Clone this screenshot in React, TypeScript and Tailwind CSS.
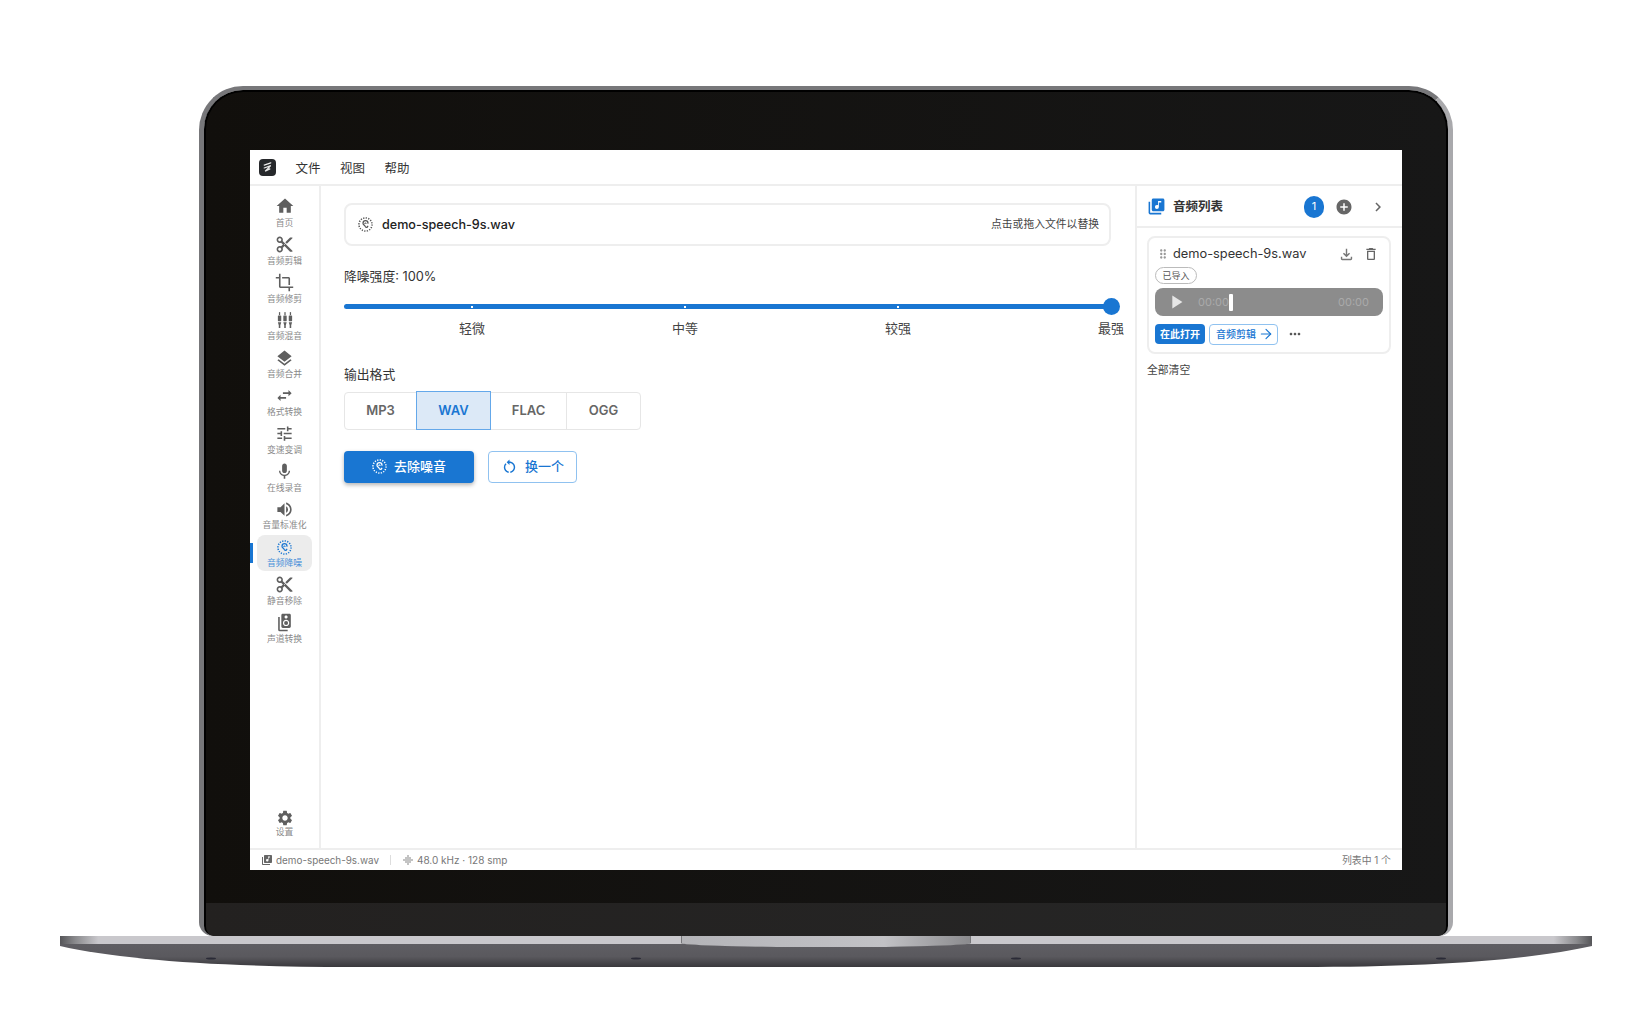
import { ArrowRight } from "lucide-react";
import type { ReactNode } from "react";
import {
  MdAddCircle,
  MdChevronRight,
  MdContentCut,
  MdCrop,
  MdDragIndicator,
  MdGraphicEq,
  MdHome,
  MdLayers,
  MdLibraryMusic,
  MdMic,
  MdMoreHoriz,
  MdOutlineDelete,
  MdOutlineFileDownload,
  MdPlayArrow,
  MdRestartAlt,
  MdSettings,
  MdSpeakerGroup,
  MdSwapHoriz,
  MdTune,
  MdVolumeUp,
} from "react-icons/md";

const FONT = "font-['Inter','Noto_Sans_CJK_SC',sans-serif]";

function NoiseIcon({ className }: { className?: string }) {
  return (
    <svg viewBox="0 0 24 24" fill="none" stroke="currentColor" className={className}>
      <circle cx="12" cy="12" r="10.500" strokeWidth="2.400" strokeDasharray="2 2.120" />
      <path
        d="M16 9.800a4 4 0 0 0-8 0c0 2.600 2.300 2.700 3 4.400.5 1.400 1.300 2.300 2.500 2.300 1.100 0 1.900-.7 2.200-1.700"
        strokeWidth="2"
        strokeLinecap="round"
      />
      <path d="M13 10a1.200 1.200 0 0 0-2 .3" strokeWidth="1.700" strokeLinecap="round" />
    </svg>
  );
}

function MixerIcon({ className }: { className?: string }) {
  return (
    <svg viewBox="0 0 24 24" fill="currentColor" className={className}>
      {[2.500, 9.750, 17].map((x) => (
        <g key={x}>
          <rect x={x + 1.400} y="1.500" width="1.700" height="4" />
          <rect x={x} y="6" width="4.500" height="7.500" rx="0.800" />
          <path d={`M${x} 15h4.500l-1.200 4v3.500h-2.100v-3.500z`} />
        </g>
      ))}
    </svg>
  );
}

function LogoIcon() {
  return (
    <div className="flex h-[17px] w-[17px] items-center justify-center rounded-[4px] bg-[#26282b]">
      <svg viewBox="0 0 16 16" fill="none" stroke="#e8e8e8" strokeWidth="1.300" strokeLinecap="round" className="h-[15px] w-[15px]">
        <path d="M4.500 5.500 11.500 3M4.500 8.500 11.500 6 5.500 12 10.500 9.500" />
      </svg>
    </div>
  );
}

const navItems: { label: string; icon: ReactNode }[] = [
  { label: "首页", icon: <MdHome className="h-[20px] w-[20px] -translate-y-px" /> },
  { label: "音频剪辑", icon: <MdContentCut className="h-[19px] w-[19px]" /> },
  { label: "音频修剪", icon: <MdCrop className="h-[19px] w-[19px]" /> },
  { label: "音频混音", icon: <MixerIcon className="h-[18px] w-[18px]" /> },
  { label: "音频合并", icon: <MdLayers className="h-[19px] w-[19px]" /> },
  { label: "格式转换", icon: <MdSwapHoriz className="h-[19px] w-[19px]" /> },
  { label: "变速变调", icon: <MdTune className="h-[19px] w-[19px]" /> },
  { label: "在线录音", icon: <MdMic className="h-[19px] w-[19px]" /> },
  { label: "音量标准化", icon: <MdVolumeUp className="h-[19px] w-[19px]" /> },
  { label: "音频降噪", icon: <NoiseIcon className="h-[15px] w-[15px]" /> },
  { label: "静音移除", icon: <MdContentCut className="h-[19px] w-[19px]" /> },
  { label: "声道转换", icon: <MdSpeakerGroup className="h-[19px] w-[19px]" /> },
];

function NavItem({ label, icon, active }: { label: string; icon: ReactNode; active?: boolean }) {
  return (
    <div className="relative h-[36px] shrink-0">
      {active && <div className="absolute left-0 top-[8px] h-[20px] w-[3px] bg-[#1976d2]" />}
      <div
        className={`mx-[7px] flex h-[36px] flex-col items-center justify-center rounded-[8px] ${
          active ? "bg-[#ececec] text-[#1976d2]" : "text-[#5f5f5f]"
        }`}
      >
        <div className="flex h-[20px] items-center justify-center">{icon}</div>
        <span className={`whitespace-nowrap text-[8.800px] leading-[12px] ${active ? "text-[#4a90d9]" : "text-[#8a8a8a]"}`}>
          {label}
        </span>
      </div>
    </div>
  );
}

function Sidebar() {
  return (
    <aside className="flex w-[71px] shrink-0 flex-col border-r-2 border-[#eeeeee] pb-[8px] pt-[9px]">
      <div className="flex flex-col gap-[1.800px]">
        {navItems.map((item) => (
          <NavItem key={item.label} label={item.label} icon={item.icon} active={item.label === "音频降噪"} />
        ))}
      </div>
      <div className="mt-auto">
        <NavItem label="设置" icon={<MdSettings className="h-[18px] w-[18px] translate-y-[2px]" />} />
      </div>
    </aside>
  );
}

function MainPanel() {
  return (
    <main className="min-w-0 flex-1 pl-[23px] pr-[24px] pt-[17px]">
      <div className="flex h-[43px] items-center rounded-[8px] border-2 border-[#eeeeee] pl-[12px] pr-[10px]">
        <NoiseIcon className="h-[15px] w-[15px] text-[#555555]" />
        <span className="ml-[9px] translate-y-px text-[12.600px] font-medium text-[#222222]">demo-speech-9s.wav</span>
        <span className="ml-auto translate-y-px text-[10.800px] text-[#444444]">点击或拖入文件以替换</span>
      </div>

      <div className="mt-[21px] text-[12.800px] leading-[20px] text-[#333333]">降噪强度: 100%</div>

      <div className="relative mt-[17px] h-[5px] rounded-full bg-[#1976d2]">
        <div className="absolute -right-[8.500px] -top-[6px] h-[17px] w-[17px] rounded-full bg-[#1976d2]" />
        <div className="absolute left-[127px] top-[2px] h-[2px] w-[2px] bg-white" />
        <div className="absolute left-[340px] top-[2px] h-[2px] w-[2px] bg-white" />
        <div className="absolute left-[553px] top-[2px] h-[2px] w-[2px] bg-white" />
      </div>
      <div className="ml-[21.500px] mt-[8.500px] grid w-[852px] grid-cols-4 text-center text-[13px] leading-[20px] text-[#444444]">
        <span>轻微</span>
        <span>中等</span>
        <span>较强</span>
        <span>最强</span>
      </div>

      <div className="mt-[27px] text-[12.800px] leading-[20px] text-[#333333]">输出格式</div>
      <div className="mt-[7px] flex h-[38px] w-[297px] rounded-[4px] border-[1.500px] border-[#e6e6e6] text-[13px] font-semibold text-[#666666]">
        <div className="flex w-[71px] items-center justify-center">MP3</div>
        <div className="-my-[1.500px] flex w-[75px] items-center justify-center border-[1.500px] border-[#64a8ea] bg-[#dce9f7] text-[#1976d2]">WAV</div>
        <div className="flex w-[76px] items-center justify-center border-r-[1.500px] border-[#e6e6e6]">FLAC</div>
        <div className="flex flex-1 items-center justify-center">OGG</div>
      </div>

      <div className="mt-[21px] flex gap-[14px]">
        <button className="flex h-[32px] w-[130px] items-center justify-center gap-[7px] rounded-[4px] bg-[#1976d2] text-[13px] font-medium text-white shadow-[0_2px_4px_rgba(0,0,0,0.3)]">
          <NoiseIcon className="h-[15px] w-[15px]" />
          去除噪音
        </button>
        <button className="flex h-[32px] w-[89px] items-center justify-center gap-[7px] rounded-[4px] border border-[#90c2f0] text-[13px] font-medium text-[#1976d2]">
          <MdRestartAlt className="h-[17px] w-[17px]" />
          换一个
        </button>
      </div>
    </main>
  );
}

function QueuePanel() {
  return (
    <aside className="flex w-[267px] shrink-0 flex-col border-l-2 border-[#eeeeee]">
      <div className="flex h-[42px] shrink-0 items-center border-b-2 border-[#eeeeee] pl-[10px] pr-[15px] pt-[1px]">
        <MdLibraryMusic className="h-[19px] w-[19px] text-[#1976d2]" />
        <span className="ml-[7px] translate-y-px text-[12.500px] font-semibold text-[#333333]">音频列表</span>
        <div className="ml-auto flex h-[22px] w-[20px] items-center justify-center rounded-full bg-[#1976d2] text-[11px] text-white">1</div>
        <MdAddCircle className="ml-[11px] h-[18px] w-[18px] text-[#666666]" />
        <MdChevronRight className="ml-[16px] h-[18px] w-[18px] text-[#666666]" />
      </div>

      <div className="ml-[10px] mr-[11px] mt-[8px] h-[118px] rounded-[8px] border-2 border-[#eeeeee] px-[6px] pt-[5px]">
        <div className="flex h-[22px] items-center">
          <MdDragIndicator className="ml-[1px] h-[14px] w-[14px] text-[#999999]" />
          <span className="ml-[3px] text-[12.800px] text-[#333333]">demo-speech-9s.wav</span>
          <MdOutlineFileDownload className="ml-auto h-[17px] w-[17px] text-[#777777]" />
          <MdOutlineDelete className="ml-[8px] mr-[4px] h-[16px] w-[16px] text-[#666666]" />
        </div>
        <div className="mt-[2px] flex h-[17px] w-[42px] items-center justify-center rounded-full border border-[#bbbbbb] text-[9px] text-[#555555]">
          已导入
        </div>
        <div className="mt-[4px] flex h-[28px] items-center rounded-[8px] bg-[#8c8c8c] pl-[10px] pr-[14px] text-[11px] text-[#aaaaaa]">
          <MdPlayArrow className="h-[22px] w-[22px] text-[#e6e6e6]" />
          <span className="ml-[11px]">00:00</span>
          <div className="h-[17px] w-[4px] rounded-[1px] bg-white" />
          <span className="ml-auto">00:00</span>
        </div>
        <div className="mt-[7px] flex h-[22px] items-center">
          <div className="flex h-[20px] w-[50px] items-center justify-center rounded-[4px] bg-[#1976d2] text-[10px] font-semibold text-white">在此打开</div>
          <div className="ml-[4px] flex h-[21px] w-[69px] items-center justify-center gap-[2px] rounded-[4px] border border-[#90c2f0] pl-[3px] text-[10px] font-medium text-[#1976d2]">
            音频剪辑
            <ArrowRight className="h-[16px] w-[16px]" strokeWidth={1.700} />
          </div>
          <MdMoreHoriz className="ml-[9px] h-[16px] w-[16px] text-[#555555]" />
        </div>
      </div>

      <div className="ml-[10px] mt-[9px] text-[10.800px] leading-[16px] text-[#444444]">全部清空</div>
    </aside>
  );
}

function AppWindow() {
  return (
    <div className="flex h-[720px] w-[1152px] shrink-0 flex-col bg-white">
      <header className="flex h-[36px] shrink-0 items-center gap-[19.500px] border-b-2 border-[#eeeeee] pl-[9px] text-[12.500px] text-[#333333]">
        <LogoIcon />
        <span className="translate-y-[2px]">文件</span>
        <span className="translate-y-[2px]">视图</span>
        <span className="translate-y-[2px]">帮助</span>
      </header>
      <div className="flex min-h-0 flex-1">
        <Sidebar />
        <MainPanel />
        <QueuePanel />
      </div>
      <footer className="flex h-[22px] shrink-0 items-center border-t-2 border-[#eeeeee] px-[11px] text-[9.900px] text-[#777777]">
        <MdLibraryMusic className="h-[12px] w-[12px] text-[#666666]" />
        <span className="ml-[3px]">demo-speech-9s.wav</span>
        <div className="ml-[11px] h-[10px] w-px bg-[#dddddd]" />
        <MdGraphicEq className="ml-[11px] h-[12px] w-[12px] text-[#888888]" />
        <span className="ml-[3px] text-[10px]">48.0 kHz · 128 smp</span>
        <span className="ml-auto">列表中 1 个</span>
      </footer>
    </div>
  );
}

function LaptopBase() {
  return (
    <div className="relative mx-auto w-[1532px]">
      <div className="h-[8px] bg-[linear-gradient(90deg,#555558_0%,#8a8a8d_1%,#c9c8cc_2.500%,#c9c8cc_97.500%,#8a8a8d_99%,#555558_100%)]" />
      <svg viewBox="0 0 1532 23" className="block h-[23px] w-[1532px]">
        <defs>
          <linearGradient id="baseFill" x1="0" y1="0" x2="0" y2="1">
            <stop offset="0" stopColor="#5f5e63" />
            <stop offset="0.55" stopColor="#5a595e" />
            <stop offset="1" stopColor="#39383c" />
          </linearGradient>
        </defs>
        <path d="M0 0H1532V2C1470 16 1370 23 1240 23H292C162 23 62 16 0 2Z" fill="url(#baseFill)" />
        {[151, 576, 956, 1381].map((x) => (
          <ellipse key={x} cx={x} cy="14.500" rx="5" ry="1" fill="#2a2a36" />
        ))}
      </svg>
      <div className="absolute left-[621px] top-0 h-[11px] w-[290px] rounded-b-[120px_4px] border-x border-[#77777a] bg-[linear-gradient(90deg,#b4b4b8_0%,#c2c2c6_70%,#8b8b8e_100%)]" />
    </div>
  );
}

export default function App() {
  return (
    <div className={`h-[1020px] w-[1652px] overflow-hidden bg-white pt-[86px] ${FONT}`}>
      <div className="mx-auto h-[850px] w-[1254px] rounded-t-[44px] rounded-b-[14px] border-[5px] border-b-0 border-t-4 border-[#77777a] border-r-[#a9a9ac]">
        <div className="flex h-full flex-col overflow-hidden rounded-t-[39px] rounded-b-[10px] border-2 border-b-0 border-black bg-gradient-to-r from-[#110f0c] to-[#171717] px-[44px] pt-[58px]">
          <AppWindow />
          <div className="-mx-[44px] mt-[33px] flex-1 bg-gradient-to-r from-[#232120] to-[#262626]" />
        </div>
      </div>
      <LaptopBase />
    </div>
  );
}
